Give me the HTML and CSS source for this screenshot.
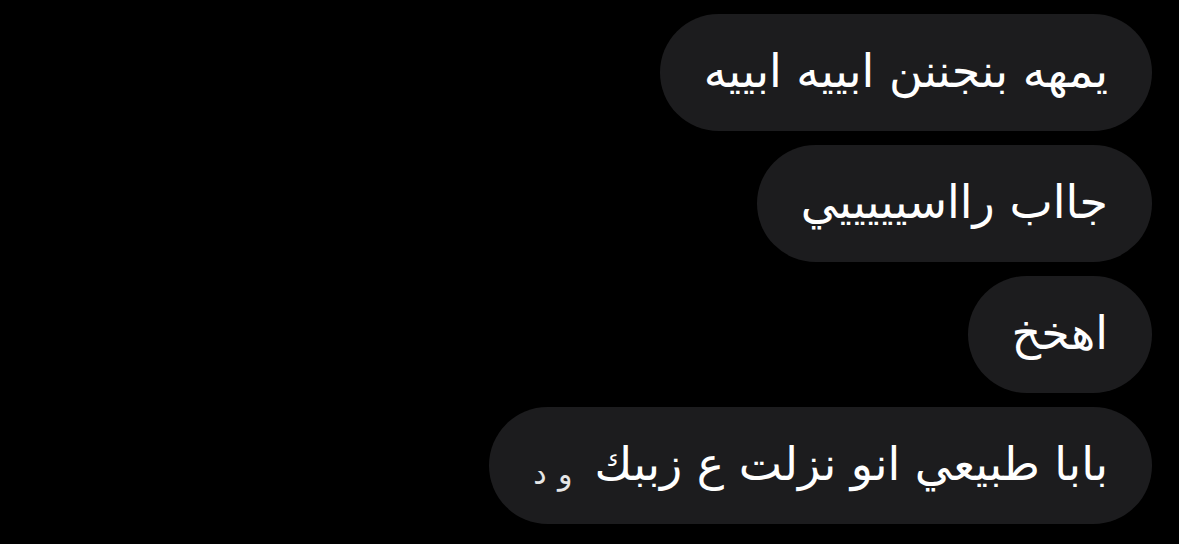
FILE: index.html
```html
<!DOCTYPE html>
<html lang="ar" dir="rtl">
<head>
    <meta charset="UTF-8">
    <meta name="viewport" content="width=device-width, initial-scale=1.0">
    <title>Chat</title>
    <link rel="stylesheet" href="styles.css">
</head>
<body>
    <div class="thread">
        <div class="bubble">يمهه بنجننن ابييه ابييه</div>
        <div class="bubble">جااب رااسيييييي</div>
        <div class="bubble">اهخخ</div>
        <div class="bubble">بابا طبيعي انو نزلت ع زببك <span class="meta">و د</span></div>
    </div>
</body>
</html>
```

FILE: styles.css
```css
body {
    margin: 0;
    background: #000;
    font-family: "DejaVu Sans", sans-serif;
}

.thread {
    display: flex;
    flex-direction: column;
    align-items: flex-start;
    gap: 14px;
    padding: 14px 27px 0 0;
}

.bubble {
    box-sizing: border-box;
    height: 117px;
    display: flex;
    align-items: center;
    gap: 22px;
    padding: 0 44px 4px;
    border-radius: 59px;
    background: #1c1c1e;
    color: #fff;
    font-size: 46px;
    white-space: nowrap;
}

/* little seen/edited marks after the last message */
.meta {
    font-size: 30px;
    word-spacing: 2px;
    color: #e6e6e6;
    padding-top: 20px;
}
```
